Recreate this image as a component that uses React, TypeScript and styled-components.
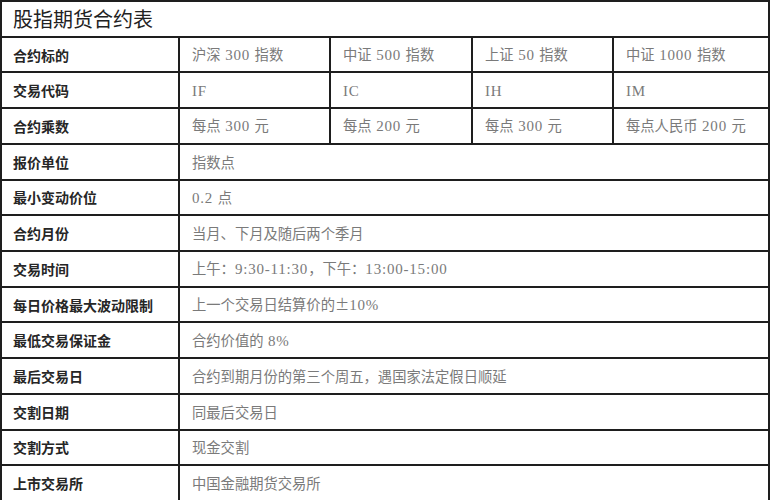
import React from "react";
import styled, { createGlobalStyle } from "styled-components";

const Global = createGlobalStyle`
  html, body { margin: 0; padding: 0; background: #fff; }
  body { width: 771px; height: 500px; overflow: hidden; }
`;

const Table = styled.div`
  box-sizing: border-box;
  width: 770px;
  height: 502px;
  display: grid;
  grid-template-columns: 176px 149px 140px 139px 154px;
  grid-template-rows: repeat(14, 1fr);
  gap: 2px;
  padding: 2px;
  background: #1e1e1e;
`;

const Cell = styled.div<{ $span?: number }>`
  background: #fff;
  display: flex;
  align-items: center;
  grid-column: span ${(p) => p.$span ?? 1};
  min-width: 0;
  white-space: pre;
  overflow: hidden;
`;

const Title = styled(Cell)`
  grid-column: 1 / -1;
  padding-left: 11px;
  font-family: "Noto Sans CJK SC", sans-serif;
  font-size: 20px;
  color: #222;
`;

const Label = styled(Cell)`
  padding-left: 11px;
  font-family: "Noto Sans CJK SC", sans-serif;
  font-weight: 700;
  font-size: 14px;
  color: #262626;
`;

const Value = styled(Cell)`
  padding-left: 12px;
  font-family: "Noto Sans CJK SC", sans-serif;
  font-size: 14.3px;
  color: #7a7a7a;
`;

const Text = styled.span`
  line-height: 20px;
`;

const Latin = styled.span`
  font-family: "Liberation Serif", serif;
  font-size: 15px;
  letter-spacing: 0.8px;
`;

type Row = { label: string; values: string[] };

const rows: Row[] = [
  { label: "合约标的", values: ["沪深 300 指数", "中证 500 指数", "上证 50 指数", "中证 1000 指数"] },
  { label: "交易代码", values: ["IF", "IC", "IH", "IM"] },
  { label: "合约乘数", values: ["每点 300 元", "每点 200 元", "每点 300 元", "每点人民币 200 元"] },
  { label: "报价单位", values: ["指数点"] },
  { label: "最小变动价位", values: ["0.2 点"] },
  { label: "合约月份", values: ["当月、下月及随后两个季月"] },
  { label: "交易时间", values: ["上午：9:30-11:30，下午：13:00-15:00"] },
  { label: "每日价格最大波动限制", values: ["上一个交易日结算价的±10%"] },
  { label: "最低交易保证金", values: ["合约价值的 8%"] },
  { label: "最后交易日", values: ["合约到期月份的第三个周五，遇国家法定假日顺延"] },
  { label: "交割日期", values: ["同最后交易日"] },
  { label: "交割方式", values: ["现金交割"] },
  { label: "上市交易所", values: ["中国金融期货交易所"] },
];

function Mixed({ text }: { text: string }) {
  const parts = text.split(/([\x20-\x7e]+)/).filter((p) => p.length > 0);
  return (
    <Text>
      {parts.map((p, i) =>
        /^[\x20-\x7e]+$/.test(p) ? <Latin key={i}>{p}</Latin> : <React.Fragment key={i}>{p}</React.Fragment>
      )}
    </Text>
  );
}

export default function App() {
  return (
    <>
      <Global />
      <Table>
        <Title>股指期货合约表</Title>
        {rows.map((r) => (
          <React.Fragment key={r.label}>
            <Label>{r.label}</Label>
            {r.values.map((v, i) => (
              <Value key={i} $span={r.values.length === 1 ? 4 : 1}>
                <Mixed text={v} />
              </Value>
            ))}
          </React.Fragment>
        ))}
      </Table>
    </>
  );
}
